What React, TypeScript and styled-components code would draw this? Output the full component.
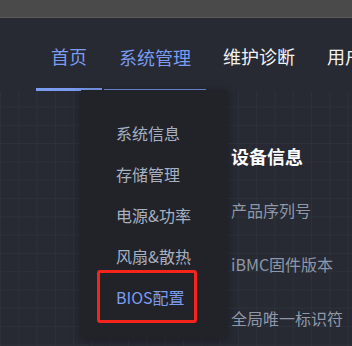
import React from "react";
import styled, { createGlobalStyle } from "styled-components";

const Global = createGlobalStyle`
  html, body { margin: 0; padding: 0; background: #272a33; }
  body { width: 352px; height: 346px; overflow: hidden;
    font-family: "Noto Sans CJK SC", "Noto Sans", sans-serif; }
`;

const Page = styled.div`
  width: 352px;
  height: 346px;
  display: flex;
  flex-direction: column;
  overflow: hidden;
`;

const TopStrip = styled.div`
  height: 17px;
  flex: none;
  background: #4a4a4a;
  border-bottom: 1px solid #5a5a5a;
`;

const Main = styled.div`
  position: relative;
  flex: 1;
  background-color: #272a33;
  background-image:
    linear-gradient(to right, #2d313a 1px, transparent 1px),
    linear-gradient(to bottom, #2d313a 1px, transparent 1px);
  background-size: 18.3px 18.3px;
  background-position: 0 -3px;
`;

const NavBar = styled.nav`
  display: flex;
  gap: 2px;
  padding-left: 36px;
  height: 73px;
  background: #272a33;
  white-space: nowrap;
`;

const NavItem = styled.div<{ $active?: boolean; $open?: boolean }>`
  box-sizing: border-box;
  height: 73px;
  padding: 6px 15px 0;
  display: flex;
  align-items: center;
  font-size: 18px;
  color: ${(p) => (p.$active || p.$open ? "#7b9cf0" : "#f2f2f2")};
  border-bottom: ${(p) =>
    p.$active ? "3px solid #7b9cf0" : p.$open ? "2px solid #6f8ee6" : "3px solid transparent"};
  flex: none;
`;

const Content = styled.section`
  margin-left: 231px;
  padding-top: 38px;
  display: flex;
  flex-direction: column;
`;

const Row = styled.div<{ $title?: boolean }>`
  height: 54px;
  display: flex;
  align-items: center;
  white-space: nowrap;
  font-size: ${(p) => (p.$title ? "18px" : "16px")};
  font-weight: ${(p) => (p.$title ? 600 : 400)};
  color: ${(p) => (p.$title ? "#ffffff" : "#8e98a8")};
`;

const Dropdown = styled.div`
  position: absolute;
  left: 81px;
  top: 72px;
  width: 146px;
  height: 248px;
  box-sizing: border-box;
  padding: 22px 0 0 35px;
  background: #212329;
  box-shadow: 0 2px 10px rgba(0, 0, 0, 0.35);
  display: flex;
  flex-direction: column;
`;

const MenuItem = styled.div<{ $current?: boolean; $marked?: boolean }>`
  position: relative;
  height: 41px;
  display: flex;
  align-items: center;
  font-size: 16px;
  white-space: nowrap;
  color: ${(p) => (p.$current ? "#7b9cf0" : "#a7b1c2")};
  ${(p) =>
    p.$marked
      ? `&::before {
          content: "";
          position: absolute;
          left: -19px;
          top: -6px;
          width: 100px;
          height: 53px;
          box-sizing: border-box;
          border: 3px solid #f5251c;
          border-radius: 3px;
        }`
      : ""}
`;

export default function App() {
  return (
    <>
      <Global />
      <Page>
        <TopStrip />
        <Main>
          <NavBar>
            <NavItem $active>首页</NavItem>
            <NavItem $open>系统管理</NavItem>
            <NavItem>维护诊断</NavItem>
            <NavItem>用户管理</NavItem>
          </NavBar>
          <Content>
            <Row $title>设备信息</Row>
            <Row>产品序列号</Row>
            <Row>iBMC固件版本</Row>
            <Row>全局唯一标识符</Row>
          </Content>
          <Dropdown>
            <MenuItem>系统信息</MenuItem>
            <MenuItem>存储管理</MenuItem>
            <MenuItem>电源&amp;功率</MenuItem>
            <MenuItem>风扇&amp;散热</MenuItem>
            <MenuItem $current $marked>BIOS配置</MenuItem>
          </Dropdown>
        </Main>
      </Page>
    </>
  );
}
